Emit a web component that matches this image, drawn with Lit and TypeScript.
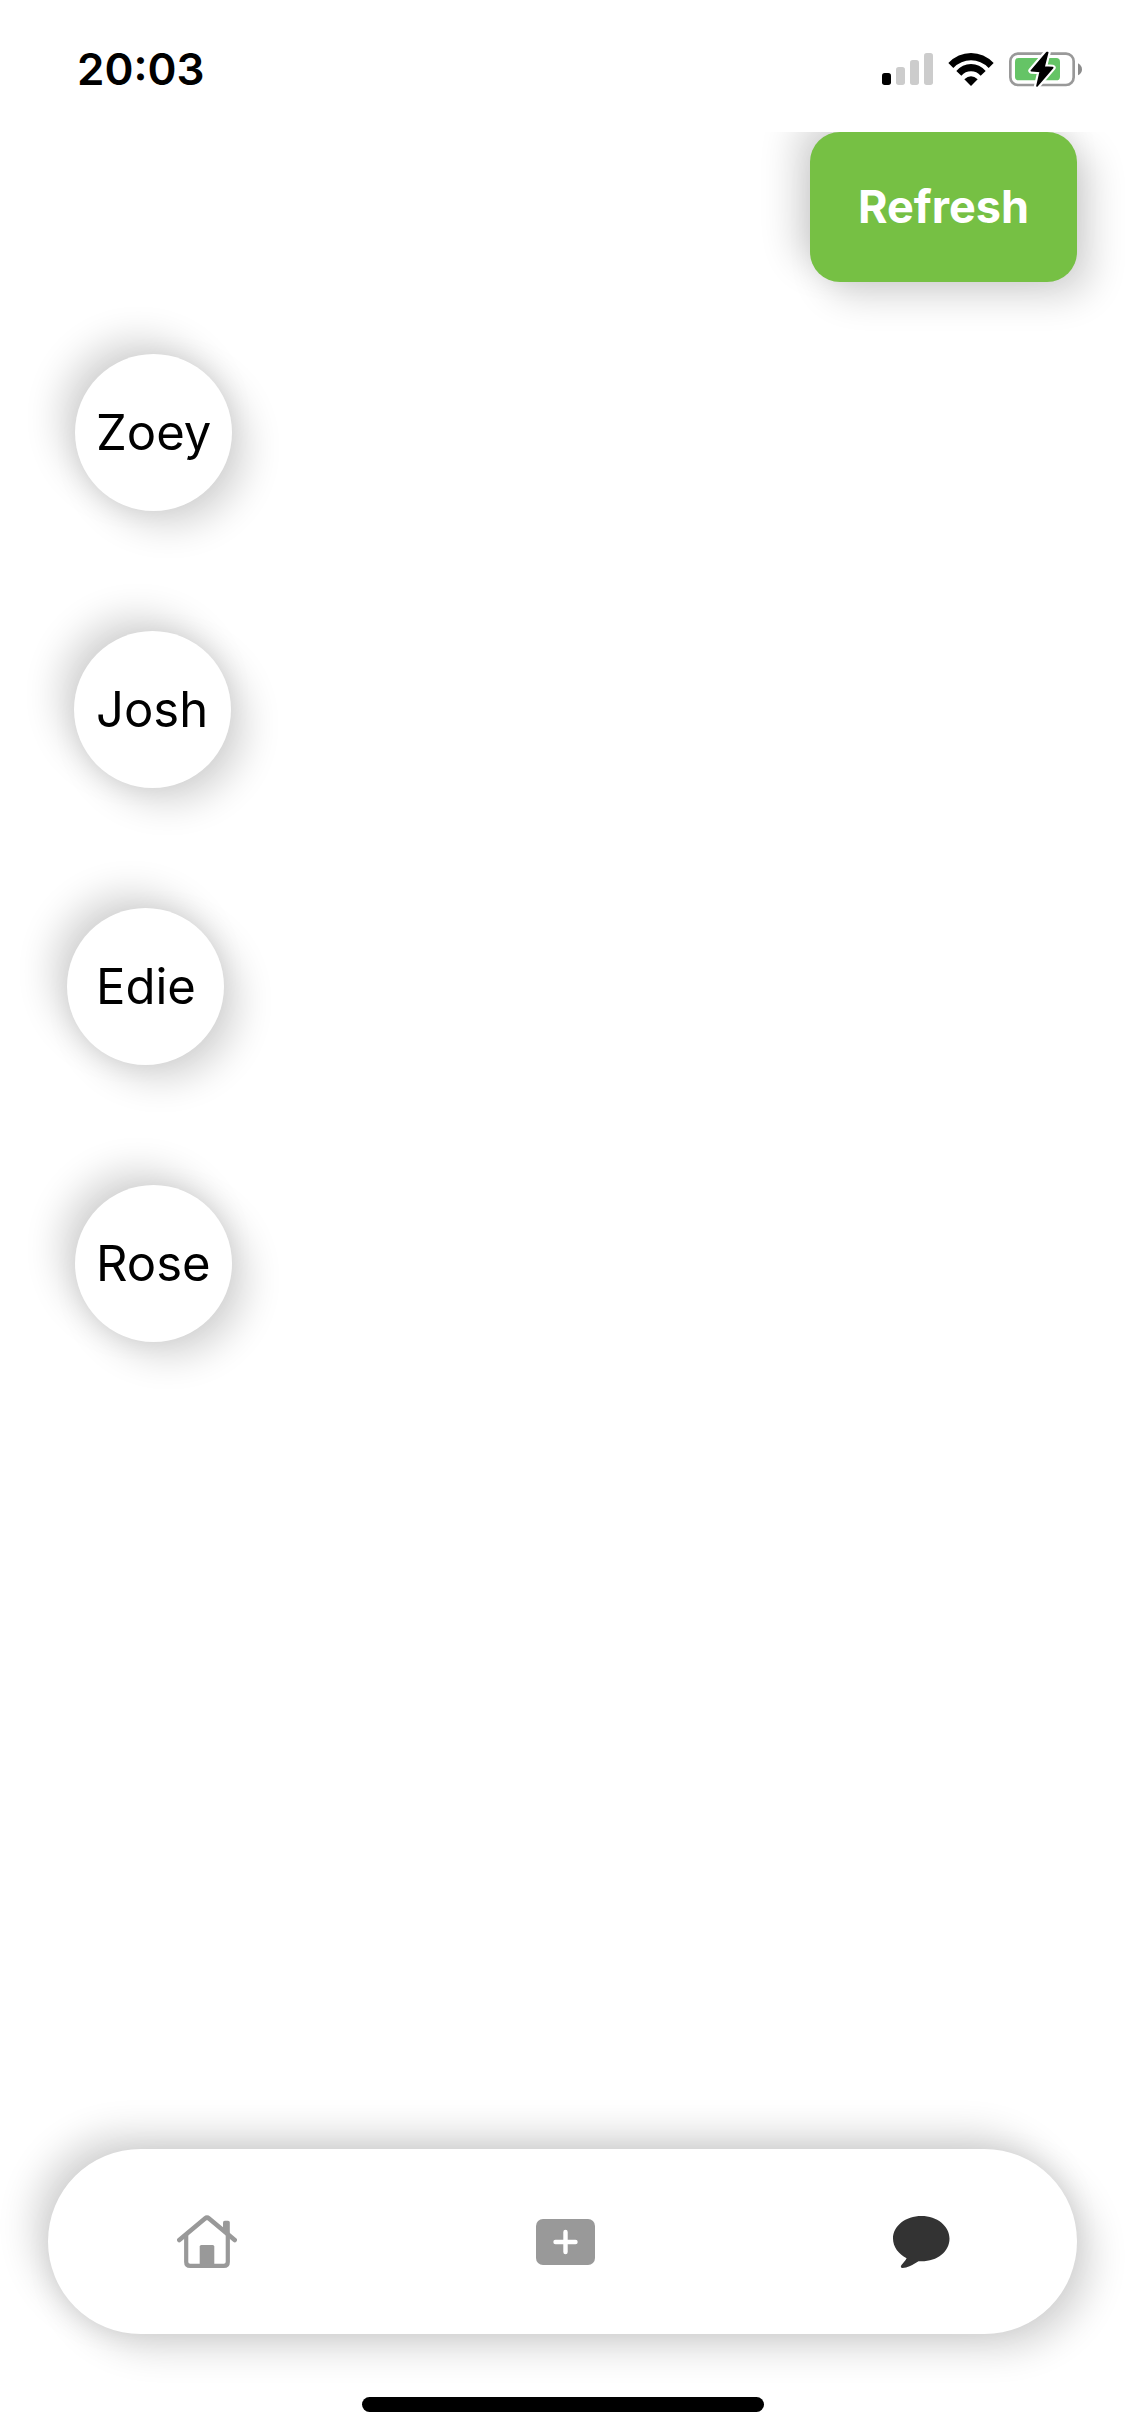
import { LitElement, html, css, svg } from "lit";
import { customElement, property, state } from "lit/decorators.js";
import { classMap } from "lit/directives/class-map.js";

@customElement("status-bar")
class StatusBar extends LitElement {
  @property() time = "";

  static styles = css`
    :host {
      display: flex;
      align-items: center;
      justify-content: space-between;
      box-sizing: border-box;
      min-height: 132px;
      padding: 6px 43px 0 77px;
    }
    .time {
      font-size: 44px;
      font-weight: 600;
      line-height: 56px;
    }
    .indicators {
      display: flex;
      align-items: center;
      gap: 15px;
    }
    svg {
      display: block;
    }
  `;

  render() {
    return html`
      <time class="time">${this.time}</time>
      <div class="indicators">
        <svg width="51" height="32" viewBox="66 69 153 96" role="img" aria-label="Signal, one bar">
          <rect x="66" y="129" width="27" height="36" rx="8" fill="#000" />
          <rect x="108" y="111" width="27" height="54" rx="8" fill="#ccc" />
          <rect x="150" y="90" width="27" height="75" rx="8" fill="#ccc" />
          <rect x="192" y="69" width="27" height="96" rx="8" fill="#ccc" />
        </svg>
        <svg width="46" height="33" viewBox="264 66 138 99" role="img" aria-label="Wi-Fi">
          <path d="M265 96 Q294 66 333 66 Q372 66 401 96 L386 111 Q363 88 333 88 Q303 88 280 111 Z" />
          <path d="M289 120 Q307 99 333 99 Q359 99 377 120 L362 134 Q350 121 333 121 Q316 121 304 134 Z" />
          <path d="M313 145 Q333 126 353 145 L333 165 Z" />
        </svg>
        <svg width="73" height="36" viewBox="447 62 219 108" role="img" aria-label="Battery charging">
          <rect x="451" y="70" width="190" height="94" rx="23" fill="none" stroke="#999" stroke-width="8" />
          <rect x="465" y="83" width="135" height="67" rx="11" fill="#65c466" />
          <path d="M654 99 Q666 106 666 117 Q666 129 654 135 Z" fill="#8c8c8c" />
          <path
            d="M560 67 L514 121 L541 123 L531 167 L578 112 L552 110 L563 67 Z"
            fill="#fff" stroke="#fff" stroke-width="18" stroke-linejoin="round"
          />
          <path
            d="M560 67 L514 121 L541 123 L531 167 L578 112 L552 110 L563 67 Z"
            fill="#000" stroke="#000" stroke-width="5" stroke-linejoin="round"
          />
        </svg>
      </div>
    `;
  }
}

@customElement("contact-list")
class ContactList extends LitElement {
  @property({ attribute: false }) names: string[] = [];

  static styles = css`
    :host {
      display: block;
    }
    .list {
      display: flex;
      flex-direction: column;
      align-items: flex-start;
      gap: 120px;
      margin: 0;
      padding: 0 48px;
      list-style: none;
    }
    /* The disc shares one cell with the name and spills out evenly around it. */
    .contact {
      display: grid;
      place-items: center;
      padding: 0;
      border: 0;
      background: none;
      color: #000;
      font: inherit;
      font-size: 49px;
      line-height: 60px;
      cursor: pointer;
    }
    .contact::before {
      content: "";
      grid-area: 1 / 1;
      width: 157px;
      height: 157px;
      margin: 0 -60px;
      border-radius: 50%;
      background: #fff;
      box-shadow: var(--soft-shadow);
    }
    .name {
      grid-area: 1 / 1;
    }
  `;

  render() {
    return html`
      <ul class="list">
        ${this.names.map(
          (name) => html`
            <li><button class="contact" type="button"><span class="name">${name}</span></button></li>
          `
        )}
      </ul>
    `;
  }
}

const tabs = [
  {
    id: "home",
    label: "Home",
    width: 60,
    height: 53,
    art: svg`
      <path d="M2.300 25 L28 3.600 Q30 1.900 32 3.600 L57.700 25" fill="none" stroke="currentColor" stroke-width="4.600" stroke-linecap="round" stroke-linejoin="round" />
      <path d="M9.200 19 V47 Q9.200 50.900 13.200 50.900 H46.800 Q50.800 50.900 50.800 47 V19" fill="none" stroke="currentColor" stroke-width="4.200" />
      <path d="M46 16 V7.500 Q46 5.700 47.800 5.700 H51 Q52.800 5.700 52.800 7.500 V21 Z" fill="currentColor" />
      <rect x="22.700" y="30" width="14.600" height="21" rx="1.600" fill="currentColor" />`,
  },
  {
    id: "add",
    label: "Add",
    width: 59,
    height: 46,
    art: svg`
      <rect width="59" height="46" rx="7" fill="currentColor" />
      <path d="M29.500 13 V33 M19.500 23 H39.500" stroke="#fff" stroke-width="4.400" stroke-linecap="round" />`,
  },
  {
    id: "chat",
    label: "Messages",
    width: 57,
    height: 52,
    art: svg`
      <path d="M28.500 0 C44 0 56.500 10 56.500 22.500 C56.500 35.500 44.500 45.300 28.500 45.300 H25.500 C20 49 14 52 9.500 52 C7.800 52 7.300 50.500 8.500 49 C10.500 46.600 12.500 44.500 13.600 42.200 C5.500 38 0 31 0 22.500 C0 10 12.500 0 28.500 0 Z" fill="currentColor" />`,
  },
];

@customElement("tab-bar")
class TabBar extends LitElement {
  @state() private active = "chat";

  static styles = css`
    :host {
      display: block;
    }
    .bar {
      display: flex;
      align-items: center;
      justify-content: space-between;
      box-sizing: border-box;
      min-height: 185px;
      margin: 0 48px;
      padding: 0 127px 0 129px;
      border-radius: 93px;
      background: #fff;
      box-shadow: var(--soft-shadow);
    }
    .tab {
      display: block;
      padding: 0;
      border: 0;
      background: none;
      color: #999;
      cursor: pointer;
    }
    .tab.active {
      color: #333;
    }
    svg {
      display: block;
    }
  `;

  render() {
    return html`
      <nav class="bar">
        ${tabs.map(
          (tab) => html`
            <button
              type="button"
              class=${classMap({ tab: true, active: tab.id === this.active })}
              aria-label=${tab.label}
              @click=${() => (this.active = tab.id)}
            >
              <svg width=${tab.width} height=${tab.height} viewBox="0 0 ${tab.width} ${tab.height}" aria-hidden="true">
                ${tab.art}
              </svg>
            </button>
          `
        )}
      </nav>
    `;
  }
}

@customElement("app-root")
class AppRoot extends LitElement {
  @state() private names = ["Zoey", "Josh", "Edie", "Rose"];

  static styles = css`
    :host {
      --soft-shadow: 15px 15px 36px rgba(0, 0, 0, 0.16), -15px -15px 36px rgba(0, 0, 0, 0.16);
      display: flex;
      flex-direction: column;
      min-height: 100vh;
      background: #fff;
      color: #000;
      font-family: Inter, "Liberation Sans", sans-serif;
    }
    .content {
      display: flex;
      flex: 1;
      flex-direction: column;
      gap: 72px;
      padding: 0 48px;
      overflow: hidden;
    }
    .refresh {
      align-self: flex-end;
      padding: 48px;
      border: 0;
      border-radius: 30px;
      background: #76c044;
      box-shadow: var(--soft-shadow);
      color: #fff;
      font: inherit;
      font-size: 45px;
      font-weight: 700;
      line-height: 54px;
      cursor: pointer;
    }
    .home-indicator {
      align-self: center;
      width: 402px;
      height: 15px;
      margin: 63px 0 24px;
      border-radius: 8px;
      background: #000;
    }
  `;

  render() {
    return html`
      <status-bar time="20:03"></status-bar>
      <main class="content">
        <button class="refresh" type="button" @click=${() => (this.names = [...this.names])}>Refresh</button>
        <contact-list .names=${this.names}></contact-list>
      </main>
      <tab-bar></tab-bar>
      <div class="home-indicator"></div>
    `;
  }
}
